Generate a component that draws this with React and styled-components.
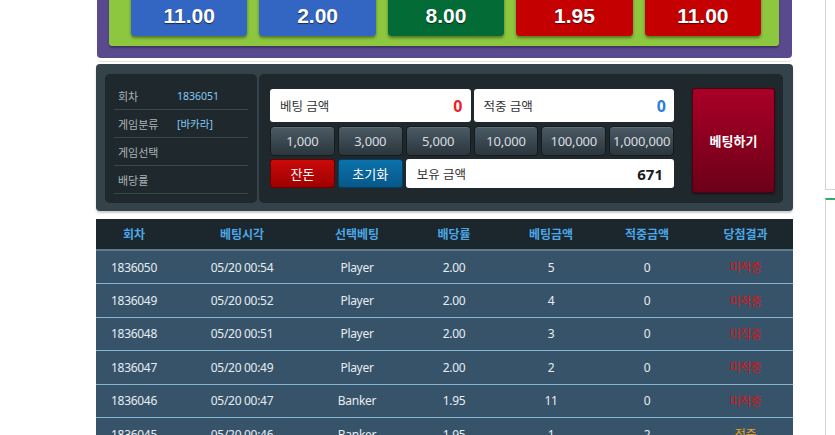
import React from "react";
import styled, { createGlobalStyle } from "styled-components";

const GlobalStyle = createGlobalStyle`
  html, body {
    margin: 0;
    padding: 0;
    background: #fff;
    overflow: hidden;
  }
  body {
    font-family: "Noto Sans", "Noto Sans CJK KR", sans-serif;
  }
`;

const odds = [
  { value: "11.00", color: "#3366c2" },
  { value: "2.00", color: "#3366c2" },
  { value: "8.00", color: "#036b35" },
  { value: "1.95", color: "#c50000" },
  { value: "11.00", color: "#c50000" },
];

const chips = ["1,000", "3,000", "5,000", "10,000", "100,000", "1,000,000"];

const info = [
  { label: "회차", value: "1836051" },
  { label: "게임분류", value: "[바카라]" },
  { label: "게임선택", value: "" },
  { label: "배당률", value: "" },
];

const history = [
  ["1836050", "05/20 00:54", "Player", "2.00", "5", "0", "미적중"],
  ["1836049", "05/20 00:52", "Player", "2.00", "4", "0", "미적중"],
  ["1836048", "05/20 00:51", "Player", "2.00", "3", "0", "미적중"],
  ["1836047", "05/20 00:49", "Player", "2.00", "2", "0", "미적중"],
  ["1836046", "05/20 00:47", "Banker", "1.95", "11", "0", "미적중"],
  ["1836045", "05/20 00:46", "Banker", "1.95", "1", "2", "적중"],
];

const columns = [
  { title: "회차", width: 76 },
  { title: "베팅시각", width: 140 },
  { title: "선택베팅", width: 90 },
  { title: "배당률", width: 104 },
  { title: "베팅금액", width: 90 },
  { title: "적중금액", width: 102 },
  { title: "당첨결과", width: 95 },
];

function App() {
  return (
    <>
      <GlobalStyle />
      <Page>
        <Main>
          <OddsFrame>
            <OddsBoard>
              {odds.map((item, index) => (
                <OddsButton key={index} $bg={item.color}>
                  {item.value}
                </OddsButton>
              ))}
            </OddsBoard>
          </OddsFrame>

          <BetPanel>
            <InfoBox>
              {info.map((row) => (
                <InfoRow key={row.label}>
                  <InfoLabel>{row.label}</InfoLabel>
                  <InfoValue>{row.value}</InfoValue>
                </InfoRow>
              ))}
            </InfoBox>

            <ControlArea>
              <ControlGrid>
                <AmountBox $span={3}>
                  <AmountLabel>베팅 금액</AmountLabel>
                  <AmountValue $color="#e8262a">0</AmountValue>
                </AmountBox>
                <AmountBox $span={3}>
                  <AmountLabel>적중 금액</AmountLabel>
                  <AmountValue $color="#2b7fd6">0</AmountValue>
                </AmountBox>
                {chips.map((chip) => (
                  <ChipButton key={chip}>{chip}</ChipButton>
                ))}
                <ActionButton $variant="red">잔돈</ActionButton>
                <ActionButton $variant="blue">초기화</ActionButton>
                <AmountBox $span={4} $pad="11px">
                  <AmountLabel>보유 금액</AmountLabel>
                  <AmountValue $color="#1c1c1c" $size="15px">
                    671
                  </AmountValue>
                </AmountBox>
              </ControlGrid>
              <BetButton>베팅하기</BetButton>
            </ControlArea>
          </BetPanel>

          <HistoryTable>
            <colgroup>
              {columns.map((col) => (
                <col key={col.title} style={{ width: col.width }} />
              ))}
            </colgroup>
            <thead>
              <tr>
                {columns.map((col) => (
                  <Th key={col.title}>{col.title}</Th>
                ))}
              </tr>
            </thead>
            <tbody>
              {history.map((row) => (
                <tr key={row[0]}>
                  {row.slice(0, 6).map((cell, i) => (
                    <Td key={i}>{cell}</Td>
                  ))}
                  <Td>
                    <Result $win={row[6] === "적중"}>{row[6]}</Result>
                  </Td>
                </tr>
              ))}
            </tbody>
          </HistoryTable>
        </Main>

        <Sidebar>
          <SideBox />
          <SideBoxGreen />
        </Sidebar>
      </Page>
    </>
  );
}

const Page = styled.div`
  display: flex;
  align-items: flex-start;
  gap: 32px;
  padding-left: 96px;
  width: 1200px;
`;

const Main = styled.div`
  width: 697px;
  flex-shrink: 0;
  display: flex;
  flex-direction: column;
`;

const OddsFrame = styled.div`
  margin: -30px 1px 0 1px;
  padding: 12px 13px 12px 12px;
  background: #594a8e;
  border-radius: 0 0 4px 4px;
  box-shadow: 0 3px 0 #fff, 0 4px 0 #e3e3e3;
`;

const OddsBoard = styled.div`
  display: flex;
  gap: 12px;
  padding: 11px 18px 10px 22px;
  background: #8dc63f;
  border-radius: 0 0 3px 3px;
  box-shadow: 0 2px 2px rgba(0, 0, 0, 0.3);
`;

const OddsButton = styled.div`
  flex: 1;
  height: 43px;
  padding-top: 2px;
  box-sizing: border-box;
  display: flex;
  align-items: center;
  justify-content: center;
  background: ${(p) => p.$bg};
  border-radius: 4px;
  box-shadow: 0 2px 3px rgba(0, 0, 0, 0.4);
  color: #fff;
  font-family: "Liberation Sans", Arial, sans-serif;
  font-weight: 700;
  font-size: 21px;
  text-shadow: 0 1px 1px rgba(0, 0, 0, 0.6);
`;

const BetPanel = styled.div`
  margin-top: 6px;
  display: flex;
  gap: 2px;
  padding: 10px 10px 8px 9px;
  background: #34424a;
  border-radius: 4px;
  box-shadow: 0 2px 2px rgba(0, 0, 0, 0.2);
`;

const InfoBox = styled.div`
  width: 152px;
  box-sizing: border-box;
  padding: 8px 9px 9px;
  background: #1e282d;
  border-radius: 5px;
`;

const InfoRow = styled.div`
  height: 28px;
  box-sizing: border-box;
  display: flex;
  align-items: center;
  padding-left: 4px;
  border-bottom: 1px solid #3a474e;
`;

const InfoLabel = styled.span`
  width: 59px;
  color: #aab3b8;
  font-size: 11px;
`;

const InfoValue = styled.span`
  color: #86c8f5;
  font-size: 10.5px;
`;

const ControlArea = styled.div`
  flex: 1;
  display: flex;
  align-items: flex-start;
  gap: 18px;
  padding: 15px 8px 10px 11px;
  background: #1e282d;
  border-radius: 5px;
`;

const ControlGrid = styled.div`
  width: 404px;
  display: grid;
  grid-template-columns: repeat(6, 1fr);
  grid-template-rows: 33px 30px 29px;
  column-gap: 3px;
  row-gap: 3.5px;
`;

const AmountBox = styled.div`
  grid-column: span ${(p) => p.$span};
  display: flex;
  align-items: center;
  justify-content: space-between;
  padding: 0 ${(p) => p.$pad || "8px"} 0 ${(p) => p.$pad || "10px"};
  background: #fff;
  border-radius: 3px;
`;

const AmountLabel = styled.span`
  color: #333;
  font-size: 12.5px;
`;

const AmountValue = styled.span`
  color: ${(p) => p.$color};
  font-weight: 700;
  font-size: ${(p) => p.$size || "16px"};
`;

const ChipButton = styled.div`
  display: flex;
  align-items: center;
  justify-content: center;
  background: linear-gradient(#4b5a64, #2b363d);
  border: 1px solid #141b1f;
  border-radius: 4px;
  box-shadow: inset 0 1px 0 rgba(255, 255, 255, 0.12);
  color: #d8dde0;
  font-size: 13px;
  letter-spacing: -0.2px;
`;

const ActionButton = styled.div`
  display: flex;
  align-items: center;
  justify-content: center;
  background: ${(p) =>
    p.$variant === "red"
      ? "linear-gradient(#c90a0a, #a00000)"
      : "linear-gradient(#0b72ac, #07588a)"};
  border: 1px solid ${(p) => (p.$variant === "red" ? "#6a0000" : "#043f63")};
  border-radius: 3px;
  color: #fff;
  font-size: 13px;
`;

const BetButton = styled.div`
  width: 83px;
  height: 105px;
  margin-top: -1px;
  box-sizing: border-box;
  display: flex;
  align-items: center;
  justify-content: center;
  background: linear-gradient(#aa0027, #6c0018);
  border: 1px solid #4a0010;
  border-radius: 3px;
  box-shadow: 0 1px 2px rgba(0, 0, 0, 0.5);
  color: #fff;
  font-weight: 700;
  font-size: 13px;
`;

const HistoryTable = styled.table`
  margin-top: 8px;
  width: 697px;
  table-layout: fixed;
  border-collapse: separate;
  border-spacing: 0;
`;

const Th = styled.th`
  height: 30px;
  padding: 0;
  background: #1b262d;
  border-bottom: 2px solid #5f7c8d;
  color: #4ca7e6;
  font-weight: 700;
  font-size: 12px;
  text-align: center;
`;

const Td = styled.td`
  height: 32.4px;
  padding: 0;
  background: #36536a;
  border-bottom: 1px solid #86b6d0;
  color: #e6edf1;
  font-size: 12px;
  letter-spacing: -0.3px;
  text-align: center;
`;

const Result = styled.span`
  color: ${(p) => (p.$win ? "#e9a21f" : "#d61616")};
`;

const Sidebar = styled.div`
  width: 200px;
  flex-shrink: 0;
  display: flex;
  flex-direction: column;
`;

const SideBox = styled.div`
  height: 190px;
  box-sizing: border-box;
  border: 1px solid #d4d4d4;
  border-top: none;
`;

const SideBoxGreen = styled.div`
  margin-top: 8px;
  height: 260px;
  border-left: 1px solid #d4d4d4;
  border-top: 2px solid #36a86b;
`;

export default App;
